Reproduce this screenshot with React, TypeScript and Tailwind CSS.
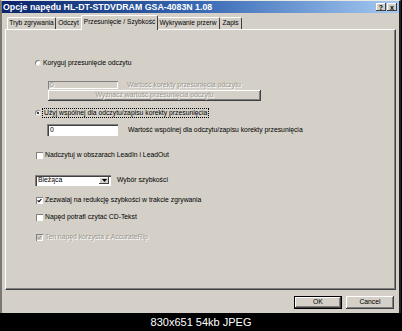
import React from "react";

const F = "font-['Liberation_Sans',Arial,sans-serif]";

function Radio({ checked }: { checked?: boolean }) {
  return (
    <span className="relative inline-flex w-[6px] h-[6px] rounded-full bg-white shadow-[inset_1px_1px_0_#808080,inset_-1px_-1px_0_#e0ddd6] items-center justify-center shrink-0">
      {checked && <span className="w-[2px] h-[2px] rounded-full bg-black" />}
    </span>
  );
}

function Check({ checked, disabled }: { checked?: boolean; disabled?: boolean }) {
  return (
    <span
      className={`inline-flex w-[7px] h-[7px] shrink-0 items-center justify-center shadow-[inset_1px_1px_0_#808080,inset_-1px_-1px_0_#fff] ${
        disabled ? "bg-[#d4d0c8]" : "bg-white"
      }`}
    >
      {checked && (
        <svg width="5" height="5" viewBox="0 0 5 5">
          <path d="M0.6 2.3 L2 3.7 L4.4 1" stroke={disabled ? "#9a9a9a" : "#000"} strokeWidth="1.1" fill="none" />
        </svg>
      )}
    </span>
  );
}

const dis = "text-[#9a978f] [text-shadow:1px_1px_0_#ffffff]";
const tab =
  "h-[12px] border-t border-white border-r border-r-[#404040] rounded-t-[2px] flex items-center justify-center whitespace-nowrap";

export default function App() {
  return (
    <div className={`w-[402px] h-[331px] bg-black flex flex-col ${F}`}>
      <div className="h-[313px] w-[401px] bg-[#d4d0c8] flex flex-col border-l-2 border-l-[#7a7873] border-r-2 border-r-[#202020] border-t border-t-[#ebe9e4]">
        {/* Title bar */}
        <div className="h-[12px] bg-gradient-to-r from-[#0a246a] via-[#3a6ab5] to-[#a6caf0] flex items-center justify-between pl-[1px] pr-[2px]">
          <span className="text-white font-bold text-[8.8px] leading-none whitespace-nowrap">
            Opcje napędu HL-DT-STDVDRAM GSA-4083N 1.08
          </span>
          <div className="flex gap-[1px]">
            <span className="w-[10px] h-[8px] bg-[#d4d0c8] shadow-[inset_-1px_-1px_0_#404040,inset_1px_1px_0_#fff] flex items-center justify-center text-[7px] font-bold leading-none text-black">
              ?
            </span>
            <span className="w-[10px] h-[8px] bg-[#d4d0c8] shadow-[inset_-1px_-1px_0_#404040,inset_1px_1px_0_#fff] flex items-center justify-center text-[7px] font-bold leading-none text-black">
              x
            </span>
          </div>
        </div>

        {/* Tabs */}
        <div className="h-[16px] flex items-end pl-[5px] text-[6.6px] leading-none text-black">
          <div className={`w-[49px] border-l ${tab}`}>Tryb zgrywania</div>
          <div className={`w-[26px] ${tab}`}>Odczyt</div>
          <div className="relative z-10 -mx-[1px] -mb-[1px] w-[77px] h-[15px] bg-[#d4d0c8] border-t border-l border-white border-r border-r-[#404040] rounded-t-[2px] flex items-center justify-center pb-[2px] whitespace-nowrap">
            Przesunięcie / Szybkość
          </div>
          <div className={`w-[63px] ${tab}`}>Wykrywanie przerw</div>
          <div className={`w-[22px] ${tab}`}>Zapis</div>
        </div>

        {/* Panel */}
        <div className="ml-[3px] w-[391px] h-[261px] border-t border-l border-white border-r border-b border-r-[#404040] border-b-[#404040] shadow-[inset_-1px_-1px_0_#808080] text-[6.8px] leading-none text-black flex flex-col">
          <div className="pl-[29px] flex flex-col">
            {/* Radio 1 */}
            <div className="mt-[29px] h-[8px] flex items-center gap-[2px]">
              <Radio />
              <span>Koryguj przesunięcie odczytu</span>
            </div>
            <div className="mt-[14px] ml-[13px] h-[8px] flex items-center">
              <div className={`w-[70px] h-[8px] bg-[#d4d0c8] shadow-[inset_1px_1px_0_#808080,inset_-1px_-1px_0_#fff] flex items-center pl-[2px] ${dis}`}>
                0
              </div>
              <span className={`ml-[9px] ${dis}`}>Wartość korekty przesunięcia odczytu</span>
            </div>
            <div
              className={`mt-[1px] ml-[13px] w-[213px] h-[11px] bg-[#d4d0c8] shadow-[inset_-1px_-1px_0_#404040,inset_1px_1px_0_#fff,inset_-2px_-2px_0_#808080] flex items-center justify-center ${dis}`}
            >
              Wyznacz wartość przesunięcia odczytu
            </div>

            {/* Radio 2 */}
            <div className="mt-[8px] h-[8px] flex items-center gap-[2px]">
              <Radio checked />
              <span className="outline outline-1 outline-dotted outline-black px-[1px] leading-[8px]">
                Użyj wspólnej dla odczytu/zapisu korekty przesunięcia
              </span>
            </div>
            <div className="mt-[7px] ml-[12px] h-[12px] flex items-center">
              <div className="w-[71px] h-[12px] bg-white shadow-[inset_1px_1px_0_#808080,inset_2px_2px_0_#404040,inset_-1px_-1px_0_#fff] flex items-center pl-[3px]">
                0
              </div>
              <span className="ml-[10px]">Wartość wspólnej dla odczytu/zapisu korekty przesunięcia</span>
            </div>

            {/* Checkbox */}
            <div className="mt-[15px] h-[8px] flex items-center gap-[2px] ml-[1px]">
              <Check />
              <span>Nadczytuj w obszarach LeadIn i LeadOut</span>
            </div>

            {/* Combo */}
            <div className="mt-[16px] h-[11px] flex items-center">
              <div className="w-[76px] h-[11px] bg-white shadow-[inset_1px_1px_0_#808080,inset_2px_2px_0_#404040,inset_-1px_-1px_0_#fff] flex items-center justify-between pl-[3px] pr-[2px]">
                <span>Bieżąca</span>
                <span className="w-[10px] h-[7px] bg-[#d4d0c8] shadow-[inset_-1px_-1px_0_#404040,inset_1px_1px_0_#fff] flex items-center justify-center">
                  <svg width="5" height="3" viewBox="0 0 5 3">
                    <path d="M0 0 H5 L2.5 3 Z" fill="#000" />
                  </svg>
                </span>
              </div>
              <span className="ml-[6px]">Wybór szybkości</span>
            </div>

            <div className="mt-[10px] h-[8px] flex items-center gap-[2px] ml-[1px]">
              <Check checked />
              <span>Zezwalaj na redukcję szybkości w trakcie zgrywania</span>
            </div>
            <div className="mt-[9px] h-[8px] flex items-center gap-[2px] ml-[1px]">
              <Check />
              <span>Napęd potrafi czytać CD-Tekst</span>
            </div>
            <div className="mt-[12px] h-[8px] flex items-center gap-[2px] ml-[1px]">
              <Check checked disabled />
              <span className={dis}>Ten napęd korzysta z AccurateRip</span>
            </div>
          </div>
        </div>

        {/* Buttons */}
        <div className="mt-[6px] flex justify-end gap-[4px] pr-[5px] text-[6.8px] leading-none text-black">
          <div className="w-[48px] h-[13px] bg-[#d4d0c8] border border-black shadow-[inset_-1px_-1px_0_#404040,inset_1px_1px_0_#fff,inset_-2px_-2px_0_#808080] flex items-center justify-center">
            OK
          </div>
          <div className="w-[48px] h-[13px] bg-[#d4d0c8] shadow-[inset_-1px_-1px_0_#404040,inset_1px_1px_0_#fff,inset_-2px_-2px_0_#808080] flex items-center justify-center">
            Cancel
          </div>
        </div>
      </div>
      <div className="flex-1 flex items-center justify-center text-white text-[11px] leading-none pt-[1px]">
        830x651 54kb JPEG
      </div>
    </div>
  );
}
